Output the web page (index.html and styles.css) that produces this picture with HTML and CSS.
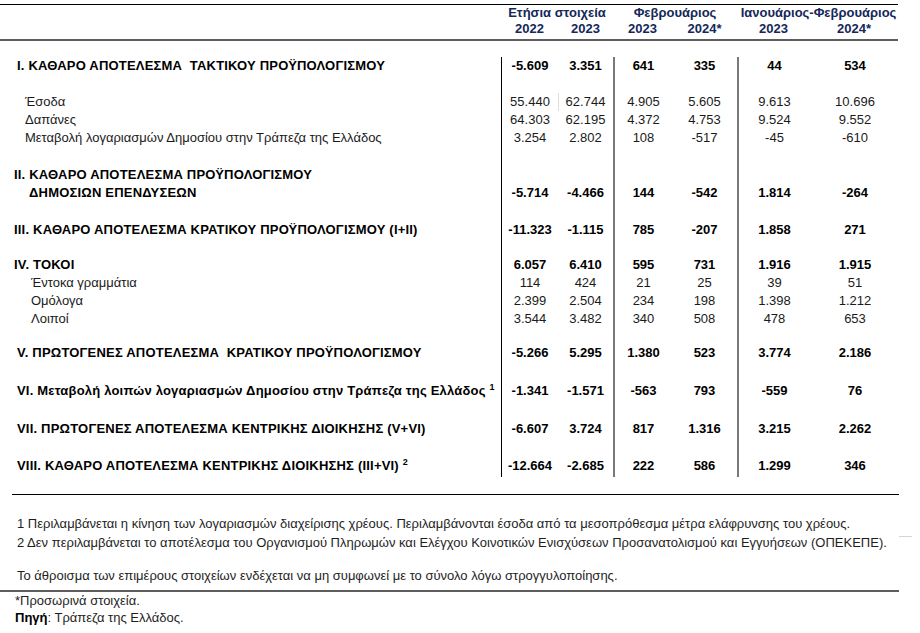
FILE: index.html
```html
<!DOCTYPE html>
<html lang="el">
<head>
<meta charset="utf-8">
<title>Αποτελέσματα Κρατικού Προϋπολογισμού</title>
<link rel="stylesheet" href="styles.css">
</head>
<body>
<div class="page">
  <div class="thead">
    <div class="hrow hrow-top">
      <div></div>
      <div class="span2">Ετήσια στοιχεία</div>
      <div class="span2">Φεβρουάριος</div>
      <div class="span2">Ιανουάριος-Φεβρουάριος</div>
    </div>
    <div class="hrow hrow-years">
      <div></div>
      <div>2022</div><div>2023</div><div>2023</div><div>2024*</div><div>2023</div><div>2024*</div>
    </div>
  </div>

  <div class="tbody">
    <div class="row b"><div class="lab l-a">I. ΚΑΘΑΡΟ ΑΠΟΤΕΛΕΣΜΑ&nbsp; ΤΑΚΤΙΚΟΥ ΠΡΟΫΠΟΛΟΓΙΣΜΟΥ</div><div>-5.609</div><div>3.351</div><div>641</div><div>335</div><div>44</div><div>534</div></div>
    <div class="row sp18"><div></div><div></div><div></div><div></div><div></div><div></div><div></div></div>
    <div class="row"><div class="lab l-sub">Έσοδα</div><div>55.440</div><div class="tick">62.744</div><div>4.905</div><div>5.605</div><div>9.613</div><div>10.696</div></div>
    <div class="row"><div class="lab l-sub">Δαπάνες</div><div>64.303</div><div>62.195</div><div>4.372</div><div>4.753</div><div>9.524</div><div>9.552</div></div>
    <div class="row"><div class="lab l-sub">Μεταβολή λογαριασμών Δημοσίου στην Τράπεζα της Ελλάδος</div><div>3.254</div><div>2.802</div><div>108</div><div>-517</div><div>-45</div><div>-610</div></div>
    <div class="row sp19"><div></div><div></div><div></div><div></div><div></div><div></div><div></div></div>
    <div class="row b"><div class="lab l-b">II. ΚΑΘΑΡΟ ΑΠΟΤΕΛΕΣΜΑ ΠΡΟΫΠΟΛΟΓΙΣΜΟΥ</div><div></div><div></div><div></div><div></div><div></div><div></div></div>
    <div class="row b"><div class="lab l-cont">ΔΗΜΟΣΙΩΝ ΕΠΕΝΔΥΣΕΩΝ</div><div>-5.714</div><div>-4.466</div><div>144</div><div>-542</div><div>1.814</div><div>-264</div></div>
    <div class="row sp18h"><div></div><div></div><div></div><div></div><div></div><div></div><div></div></div>
    <div class="row b"><div class="lab l-b">III. ΚΑΘΑΡΟ ΑΠΟΤΕΛΕΣΜΑ ΚΡΑΤΙΚΟΥ ΠΡΟΫΠΟΛΟΓΙΣΜΟΥ (I+II)</div><div>-11.323</div><div>-1.115</div><div>785</div><div>-207</div><div>1.858</div><div>271</div></div>
    <div class="row sp17h"><div></div><div></div><div></div><div></div><div></div><div></div><div></div></div>
    <div class="row b"><div class="lab l-b">IV. ΤΟΚΟΙ</div><div>6.057</div><div>6.410</div><div>595</div><div>731</div><div>1.916</div><div>1.915</div></div>
    <div class="row"><div class="lab l-sub2">Έντοκα γραμμάτια</div><div>114</div><div>424</div><div>21</div><div>25</div><div>39</div><div>51</div></div>
    <div class="row"><div class="lab l-sub2">Ομόλογα</div><div>2.399</div><div>2.504</div><div>234</div><div>198</div><div>1.398</div><div>1.212</div></div>
    <div class="row"><div class="lab l-sub2">Λοιποί</div><div>3.544</div><div>3.482</div><div>340</div><div>508</div><div>478</div><div>653</div></div>
    <div class="row sp16"><div></div><div></div><div></div><div></div><div></div><div></div><div></div></div>
    <div class="row b"><div class="lab l-a">V. ΠΡΩΤΟΓΕΝΕΣ ΑΠΟΤΕΛΕΣΜΑ&nbsp; ΚΡΑΤΙΚΟΥ ΠΡΟΫΠΟΛΟΓΙΣΜΟΥ</div><div>-5.266</div><div>5.295</div><div>1.380</div><div>523</div><div>3.774</div><div>2.186</div></div>
    <div class="row sp20"><div></div><div></div><div></div><div></div><div></div><div></div><div></div></div>
    <div class="row b"><div class="lab l-a">VI. Μεταβολή λοιπών λογαριασμών Δημοσίου στην Τράπεζα της Ελλάδος <sup>1</sup></div><div>-1.341</div><div>-1.571</div><div>-563</div><div>793</div><div>-559</div><div>76</div></div>
    <div class="row sp20"><div></div><div></div><div></div><div></div><div></div><div></div><div></div></div>
    <div class="row b"><div class="lab l-a">VII. ΠΡΩΤΟΓΕΝΕΣ ΑΠΟΤΕΛΕΣΜΑ ΚΕΝΤΡΙΚΗΣ ΔΙΟΙΚΗΣΗΣ (V+VI)</div><div>-6.607</div><div>3.724</div><div>817</div><div>1.316</div><div>3.215</div><div>2.262</div></div>
    <div class="row sp19"><div></div><div></div><div></div><div></div><div></div><div></div><div></div></div>
    <div class="row b"><div class="lab l-a">VIII. ΚΑΘΑΡΟ ΑΠΟΤΕΛΕΣΜΑ ΚΕΝΤΡΙΚΗΣ ΔΙΟΙΚΗΣΗΣ (III+VI) <sup>2</sup></div><div>-12.664</div><div>-2.685</div><div>222</div><div>586</div><div>1.299</div><div>346</div></div>
    <div class="row sp2"><div></div><div></div><div></div><div></div><div></div><div></div><div></div></div>
  </div>

  <div class="rule-end"></div>

  <div class="notes">
    <p class="note">1 Περιλαμβάνεται η κίνηση των λογαριασμών διαχείρισης χρέους. Περιλαμβάνονται έσοδα από τα μεσοπρόθεσμα μέτρα ελάφρυνσης του χρέους.</p>
    <p class="note">2 Δεν περιλαμβάνεται το αποτέλεσμα του Οργανισμού Πληρωμών και Ελέγχου Κοινοτικών Ενισχύσεων Προσανατολισμού και Εγγυήσεων (ΟΠΕΚΕΠΕ).</p>
    <p class="note note-sum">Το άθροισμα των επιμέρους στοιχείων ενδέχεται να μη συμφωνεί με το σύνολο λόγω στρογγυλοποίησης.</p>
  </div>
  <div class="rule-src"></div>
  <div class="source">
    <p>*Προσωρινά στοιχεία.</p>
    <p><b>Πηγή</b>: Τράπεζα της Ελλάδος.</p>
  </div>
</div>
</body>
</html>
```

FILE: styles.css
```css
* { box-sizing: border-box; }

html, body {
  margin: 0;
  padding: 0;
  background: #ffffff;
}

body {
  font-family: "Liberation Sans", Arial, sans-serif;
  font-size: 13px;
  color: #111111;
}

.page {
  width: 920px;
  padding-top: 4px;
}

/* ---------- header ---------- */
.thead {
  width: 898px;
  border-top: 1px solid #000000;
  border-bottom: 2px solid #5e5e5e;
  padding-bottom: 2px;
  color: #14285a;
  font-weight: bold;
}

.hrow {
  display: grid;
  grid-template-columns: 501px 57px 55px 59px 65px 73px 88px;
  text-align: center;
  white-space: nowrap;
}

.hrow-top { height: 15px; line-height: 15px; }
.hrow-years { height: 17px; line-height: 17px; }

.span2 { grid-column: span 2; }
.hrow-top .span2:nth-child(4) { padding-left: 2px; }

/* ---------- body ---------- */
.tbody {
  padding-top: 16px;
}

.row {
  display: grid;
  grid-template-columns: 501px 57px 55px 59px 65px 73px 90px;
  height: 18px;
  line-height: 18px;
  text-align: center;
  white-space: nowrap;
  color: #1a1a1a;
}

.row > div:nth-child(2) { border-left: 1px solid #000000; }
.row > div:nth-child(4),
.row > div:nth-child(6) { border-left: 2px solid #7a7a7a; }

.row.b { font-weight: bold; color: #000000; }
.row.b .lab { letter-spacing: 0.2px; }

.row .tick { box-shadow: inset 1px 0 0 #dddddd; }

.sp2 { height: 2px; }
.sp16 { height: 16px; }
.sp17h { height: 17.5px; }
.sp18 { height: 18px; }
.sp18h { height: 18.5px; }
.sp19 { height: 19px; }
.sp20 { height: 20px; }

.lab { text-align: left; }
.l-a { padding-left: 17px; }
.l-b { padding-left: 14px; }
.l-cont { padding-left: 29px; }
.l-sub { padding-left: 25px; }
.l-sub2 { padding-left: 31px; }

sup {
  font-size: 9px;
  line-height: 0;
  vertical-align: 5px;
  letter-spacing: 0;
}

/* ---------- notes ---------- */
.rule-end {
  margin-top: 17px;
  margin-left: 12px;
  width: 887px;
  height: 1px;
  background: #000000;
}

.notes {
  position: relative;
  padding-top: 19px;
  font-size: 13px;
  color: #1e1e1e;
}

.notes::after {
  content: "";
  position: absolute;
  left: 899px;
  top: 41px;
  width: 13px;
  height: 1px;
  background: #d4d4d4;
}

.note {
  margin: 0;
  padding-left: 17px;
  height: 19px;
  line-height: 19px;
  white-space: nowrap;
}

.note-sum { margin-top: 13.5px; }

.rule-src {
  margin-top: 5.5px;
  width: 899px;
  height: 2px;
  background: #5e5e5e;
}

.source {
  font-size: 13px;
  color: #1e1e1e;
  padding-left: 15px;
}

.source p {
  margin: 0;
  height: 17px;
  line-height: 17px;
}

.source b { font-weight: bold; color: #000000; }
```
